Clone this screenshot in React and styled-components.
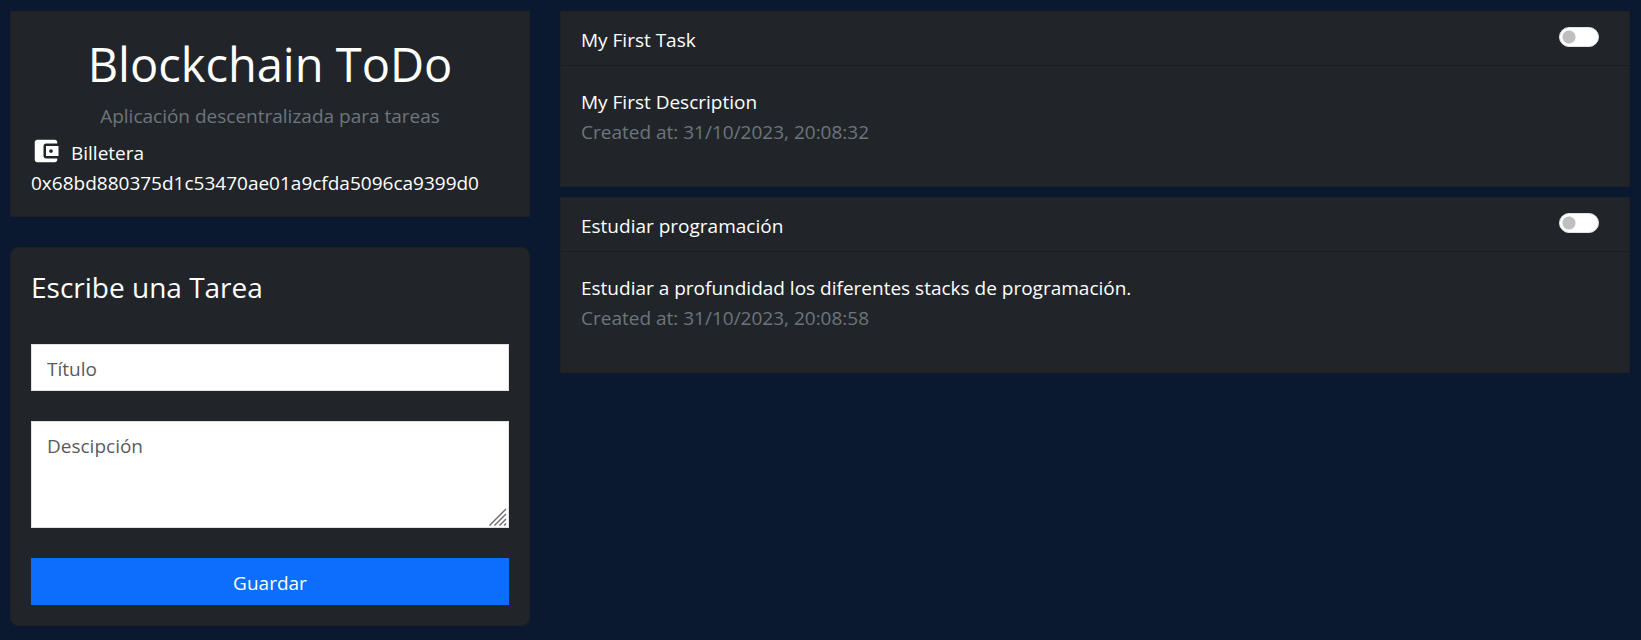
import React from "react";
import styled, { createGlobalStyle } from "styled-components";

const GlobalStyle = createGlobalStyle`
  *, *::before, *::after { box-sizing: border-box; }
  html { background: #0a192f; }
  body {
    margin: 0;
    background: #0a192f;
    color: #fff;
    font-family: "Open Sans", "Noto Sans", "Liberation Sans", sans-serif;
    font-size: 19px;
    line-height: 30px;
  }
`;

const Page = styled.main`
  display: flex;
  align-items: flex-start;
  gap: 30px;
  padding: 11px 11px 11px 10px;
`;

const Sidebar = styled.div`
  flex: 0 0 calc(100% / 3 - 20px);
  min-width: 0;
  display: flex;
  flex-direction: column;
  gap: 30px;
`;

const TaskList = styled.section`
  flex: 1;
  min-width: 0;
  display: flex;
  flex-direction: column;
  gap: 10px;
`;

const Card = styled.article`
  background: #212529;
  border: 1px solid #1d2024;
  border-radius: ${(p) => (p.$rounded ? "8px" : "0")};
`;

const Intro = styled.div`
  padding: 20px 20px 18px;
`;

const AppTitle = styled.h1`
  margin: 0 0 5px;
  font-size: 47px;
  font-weight: 400;
  line-height: 64px;
  text-align: center;
`;

const Muted = styled.p`
  margin: 0;
  color: #6c757d;
  text-align: ${(p) => (p.$center ? "center" : "left")};
`;

const Wallet = styled.div`
  display: flex;
  align-items: flex-end;
  gap: 10px;
  height: 37px;
`;

const WalletIcon = styled.svg`
  width: 30px;
  height: 30px;
  margin-bottom: 2px;
  fill: #fff;
`;

const Text = styled.p`
  margin: 0;
  overflow-wrap: anywhere;
`;

const FormCard = styled(Card)`
  padding: 20px;
`;

const Form = styled.form`
  display: flex;
  flex-direction: column;
  gap: 30px;
`;

const FormTitle = styled.h2`
  margin: 0 0 8px;
  font-size: 28px;
  font-weight: 400;
  line-height: 38px;
`;

const Field = styled.input`
  display: block;
  width: 100%;
  height: 47px;
  margin: 0;
  padding: 9px 15px 6px;
  border: 1px solid #dee2e6;
  border-radius: 0;
  background: #fff;
  color: #212529;
  font: inherit;
  &::placeholder { color: #585b5e; opacity: 1; }
`;

const TextAreaWrap = styled.div`
  position: relative;
`;

const TextArea = styled(Field)`
  height: 107px;
  min-height: 47px;
  resize: vertical;
  &::-webkit-resizer { background: transparent; }
`;

const Grip = styled.svg`
  position: absolute;
  right: 2px;
  bottom: 2px;
  width: 18px;
  height: 18px;
  fill: none;
  stroke: #6b6b6b;
  stroke-width: 1.4;
  pointer-events: none;
`;

const SaveButton = styled.button`
  height: 47px;
  padding: 2px 15px 0;
  border: 0;
  background: #0d6efd;
  color: #fff;
  font: inherit;
  cursor: pointer;
`;

const CardHeader = styled.header`
  display: flex;
  justify-content: space-between;
  align-items: flex-start;
  padding: 13px 30px 10px 20px;
  border-bottom: 1px solid #1a1d20;
`;

const Switch = styled.input`
  appearance: none;
  width: 40px;
  height: 20px;
  margin: 2px 0 0;
  border: 1px solid #dee2e6;
  border-radius: 10px;
  background: #fff radial-gradient(circle at 9px 9px, #bfbfbf 6px, transparent 7px) no-repeat;
  cursor: pointer;
  &:checked {
    border-color: #0d6efd;
    background: #0d6efd radial-gradient(circle at 29px 9px, #fff 6px, transparent 7px) no-repeat;
  }
`;

const TaskBody = styled.div`
  padding: 21px 20px 39px;
`;

const tasks = [
  { id: 1, title: "My First Task", description: "My First Description", created: "31/10/2023, 20:08:32" },
  {
    id: 2,
    title: "Estudiar programación",
    description: "Estudiar a profundidad los diferentes stacks de programación.",
    created: "31/10/2023, 20:08:58",
  },
];

function Task({ task }) {
  return (
    <Card>
      <CardHeader>
        <label htmlFor={`task-${task.id}`}>{task.title}</label>
        <Switch type="checkbox" role="switch" id={`task-${task.id}`} />
      </CardHeader>
      <TaskBody>
        <Text>{task.description}</Text>
        <Muted>Created at: {task.created}</Muted>
      </TaskBody>
    </Card>
  );
}

export default function App() {
  return (
    <>
      <GlobalStyle />
      <Page>
        <Sidebar>
          <Card as="header">
            <Intro>
              <AppTitle>Blockchain ToDo</AppTitle>
              <Muted $center>Aplicación descentralizada para tareas</Muted>
              <Wallet>
                <WalletIcon viewBox="0 0 24 24" aria-hidden="true">
                  <path d="M21 18v1c0 1.1-.9 2-2 2H5c-1.11 0-2-.9-2-2V5c0-1.1.89-2 2-2h14c1.1 0 2 .9 2 2v1h-9c-1.11 0-2 .9-2 2v8c0 1.1.89 2 2 2h9zm-9-2h10V8H12v8zm4-2.5c-.83 0-1.5-.67-1.5-1.5s.67-1.5 1.5-1.5 1.5.67 1.5 1.5-.67 1.5-1.5 1.5z" />
                </WalletIcon>
                <span>Billetera</span>
              </Wallet>
              <Text>0x68bd880375d1c53470ae01a9cfda5096ca9399d0</Text>
            </Intro>
          </Card>
          <FormCard as="section" $rounded>
            <Form onSubmit={(e) => e.preventDefault()}>
              <FormTitle>Escribe una Tarea</FormTitle>
              <Field type="text" placeholder="Título" aria-label="Título" />
              <TextAreaWrap>
                <TextArea as="textarea" placeholder="Descipción" aria-label="Descipción" />
                <Grip viewBox="0 0 18 18" aria-hidden="true">
                  <path d="M0.5 17.5 17 1M5.5 17.5 17 6M10.5 17.5 17 11M15 17.5 17 15.5" />
                </Grip>
              </TextAreaWrap>
              <SaveButton type="submit">Guardar</SaveButton>
            </Form>
          </FormCard>
        </Sidebar>
        <TaskList>
          {tasks.map((task) => (
            <Task key={task.id} task={task} />
          ))}
        </TaskList>
      </Page>
    </>
  );
}
